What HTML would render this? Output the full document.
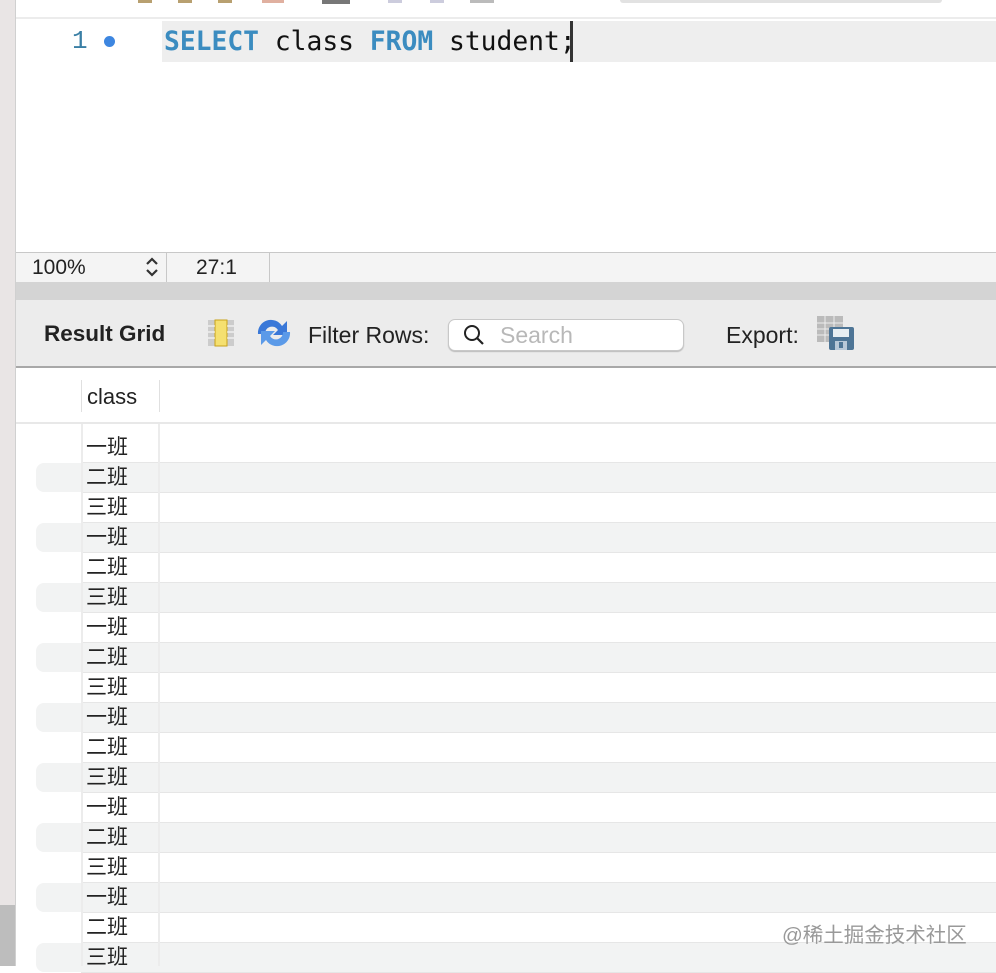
<!DOCTYPE html>
<html><head><meta charset="utf-8"><style>
*{margin:0;padding:0;box-sizing:border-box}
body{width:996px;height:966px;overflow:hidden;background:#fff;position:relative;font-family:"Liberation Sans","Noto Sans CJK SC",sans-serif}
.abs{position:absolute}
.row{position:absolute;left:36px;right:0;height:30px}
.row span{position:absolute;left:50px;top:1px;line-height:28px;font-size:21px;color:#222}
.stripe{background:#f2f3f3;border-radius:8px 0 0 8px}
</style></head><body>
<div class="abs" style="left:0;top:0;width:15px;height:905px;background:#e9e5e5"></div>
<div class="abs" style="left:0;top:905px;width:15px;height:61px;background:#bdbdbd"></div>
<div class="abs" style="left:15px;top:0;width:1px;height:966px;background:#d0d0d0"></div>
<div class="abs" style="left:16px;top:17px;width:980px;height:2px;background:#ececec"></div>
<div class="abs" style="left:138px;top:0;width:14px;height:3px;background:#b8a070"></div>
<div class="abs" style="left:178px;top:0;width:14px;height:3px;background:#b8a070"></div>
<div class="abs" style="left:218px;top:0;width:14px;height:3px;background:#b8a070"></div>
<div class="abs" style="left:262px;top:0;width:22px;height:3px;background:#e0b0a0"></div>
<div class="abs" style="left:322px;top:0;width:28px;height:4px;background:#777"></div>
<div class="abs" style="left:388px;top:0;width:14px;height:3px;background:#ccd"></div>
<div class="abs" style="left:430px;top:0;width:14px;height:3px;background:#ccd"></div>
<div class="abs" style="left:470px;top:0;width:24px;height:3px;background:#bbb"></div>
<div class="abs" style="left:620px;top:0;width:322px;height:3px;background:#e2e2e2;border-radius:0 0 4px 4px"></div>
<div class="abs" style="left:162px;top:21px;width:834px;height:41px;background:#eeeeee"></div>
<div class="abs" style="left:72px;top:26px;font-family:'Liberation Mono',monospace;font-size:26px;color:#3a7fa5">1</div>
<div class="abs" style="left:104px;top:36px;width:11px;height:11px;border-radius:50%;background:#3d86e0"></div>
<div class="abs" style="left:164px;top:27px;font-family:'DejaVu Sans Mono','Liberation Mono',monospace;font-size:26.3px;color:#111;white-space:pre"><b style="color:#3b8cc0">SELECT</b> class <b style="color:#3b8cc0">FROM</b> student;</div>
<div class="abs" style="left:570px;top:21px;width:3px;height:41px;background:#333"></div>
<div class="abs" style="left:16px;top:252px;width:980px;height:30px;background:#f4f4f4;border-top:1px solid #c8c8c8"></div>
<div class="abs" style="left:32px;top:256px;font-size:21px;color:#222">100%</div>
<svg class="abs" style="left:143px;top:255px" width="18" height="24"><path d="M4 9 L9 4 L14 9 M4 15 L9 20 L14 15" fill="none" stroke="#333" stroke-width="2.2"/></svg>
<div class="abs" style="left:166px;top:253px;width:1px;height:29px;background:#c8c8c8"></div>
<div class="abs" style="left:196px;top:256px;font-size:21px;color:#222">27:1</div>
<div class="abs" style="left:269px;top:253px;width:1px;height:29px;background:#c8c8c8"></div>
<div class="abs" style="left:16px;top:282px;width:980px;height:18px;background:#d4d4d4"></div>
<div class="abs" style="left:16px;top:300px;width:980px;height:67px;background:#ececec"></div>
<div class="abs" style="left:16px;top:366px;width:980px;height:2px;background:#a8a8a8"></div>
<div class="abs" style="left:44px;top:321px;font-size:22.5px;font-weight:bold;color:#222">Result Grid</div>
<svg class="abs" style="left:207px;top:319px" width="28" height="28"><rect x="1" y="1" width="26" height="26" fill="#ccc"/><rect x="8" y="1" width="12" height="26" fill="#f5e070" stroke="#c9a21a"/><g stroke="#fff"><line x1="1" y1="7" x2="8" y2="7"/><line x1="1" y1="13" x2="8" y2="13"/><line x1="1" y1="19" x2="8" y2="19"/><line x1="20" y1="7" x2="27" y2="7"/><line x1="20" y1="13" x2="27" y2="13"/><line x1="20" y1="19" x2="27" y2="19"/></g></svg>
<svg class="abs" style="left:256px;top:318px" width="36" height="30"><path d="M2 16 A13 13 0 0 1 26 8 L31 3 L31 17 L17 17 L22 12 A7 7 0 0 0 9 16 Z" fill="#3a78d8"/><path d="M34 14 A13 13 0 0 1 10 22 L5 27 L5 13 L19 13 L14 18 A7 7 0 0 0 27 14 Z" fill="#5b9ae8"/></svg>
<div class="abs" style="left:308px;top:322px;font-size:23px;color:#222">Filter Rows:</div>
<div class="abs" style="left:448px;top:319px;width:236px;height:32px;background:#fff;border:1px solid #c8c8c8;border-radius:7px;box-shadow:0 1px 1px #bbb"></div>
<svg class="abs" style="left:463px;top:324px" width="22" height="22"><circle cx="9" cy="9" r="7" fill="none" stroke="#222" stroke-width="2"/><line x1="14" y1="14" x2="20" y2="20" stroke="#222" stroke-width="2.2"/></svg>
<div class="abs" style="left:500px;top:322px;font-size:23px;color:#b8b8b8">Search</div>
<div class="abs" style="left:726px;top:322px;font-size:23px;color:#222">Export:</div>
<svg class="abs" style="left:816px;top:315px" width="40" height="36"><rect x="1" y="1" width="26" height="26" fill="#bbb"/><g stroke="#eee"><line x1="1" y1="8" x2="27" y2="8"/><line x1="1" y1="14" x2="27" y2="14"/><line x1="1" y1="20" x2="27" y2="20"/><line x1="9" y1="1" x2="9" y2="27"/><line x1="18" y1="1" x2="18" y2="27"/></g><rect x="13" y="12" width="25" height="23" rx="2" fill="#4e7596"/><rect x="17" y="14" width="16" height="8" fill="#e8eef2"/><rect x="19" y="26" width="12" height="9" fill="#b8c8d8"/><rect x="23" y="27" width="4" height="6" fill="#4e7596"/></svg>
<div class="abs" style="left:81px;top:380px;width:1px;height:32px;background:#e0e0e0"></div>
<div class="abs" style="left:159px;top:380px;width:1px;height:32px;background:#e0e0e0"></div>
<div class="abs" style="left:87px;top:384px;font-size:22px;color:#222">class</div>
<div class="abs" style="left:16px;top:422px;width:980px;height:2px;background:#e8e8e8"></div>
<div id="rows"></div>
<div class="abs" style="left:81px;top:424px;width:2px;height:542px;background:#ececec"></div>
<div class="abs" style="left:158px;top:424px;width:2px;height:542px;background:#ececec"></div>
<div class="abs" style="left:782px;top:918px;font-size:20.5px;color:#999">@稀土掘金技术社区</div>
<script>
var t=["一班","二班","三班"],h="";
for(var i=0;i<18;i++){var y=432+30*i;h+='<div class="row'+(i%2?' stripe':'')+'" style="top:'+(y+1)+'px;height:29px"><span>'+t[i%3]+'</span></div>';if(i%2)h+='<div class="abs" style="left:81px;right:0;top:'+y+'px;height:1px;background:#e6e6e6"></div><div class="abs" style="left:81px;right:0;top:'+(y+30)+'px;height:1px;background:#e6e6e6"></div>';}
document.getElementById('rows').innerHTML=h;
</script>
</body></html>
